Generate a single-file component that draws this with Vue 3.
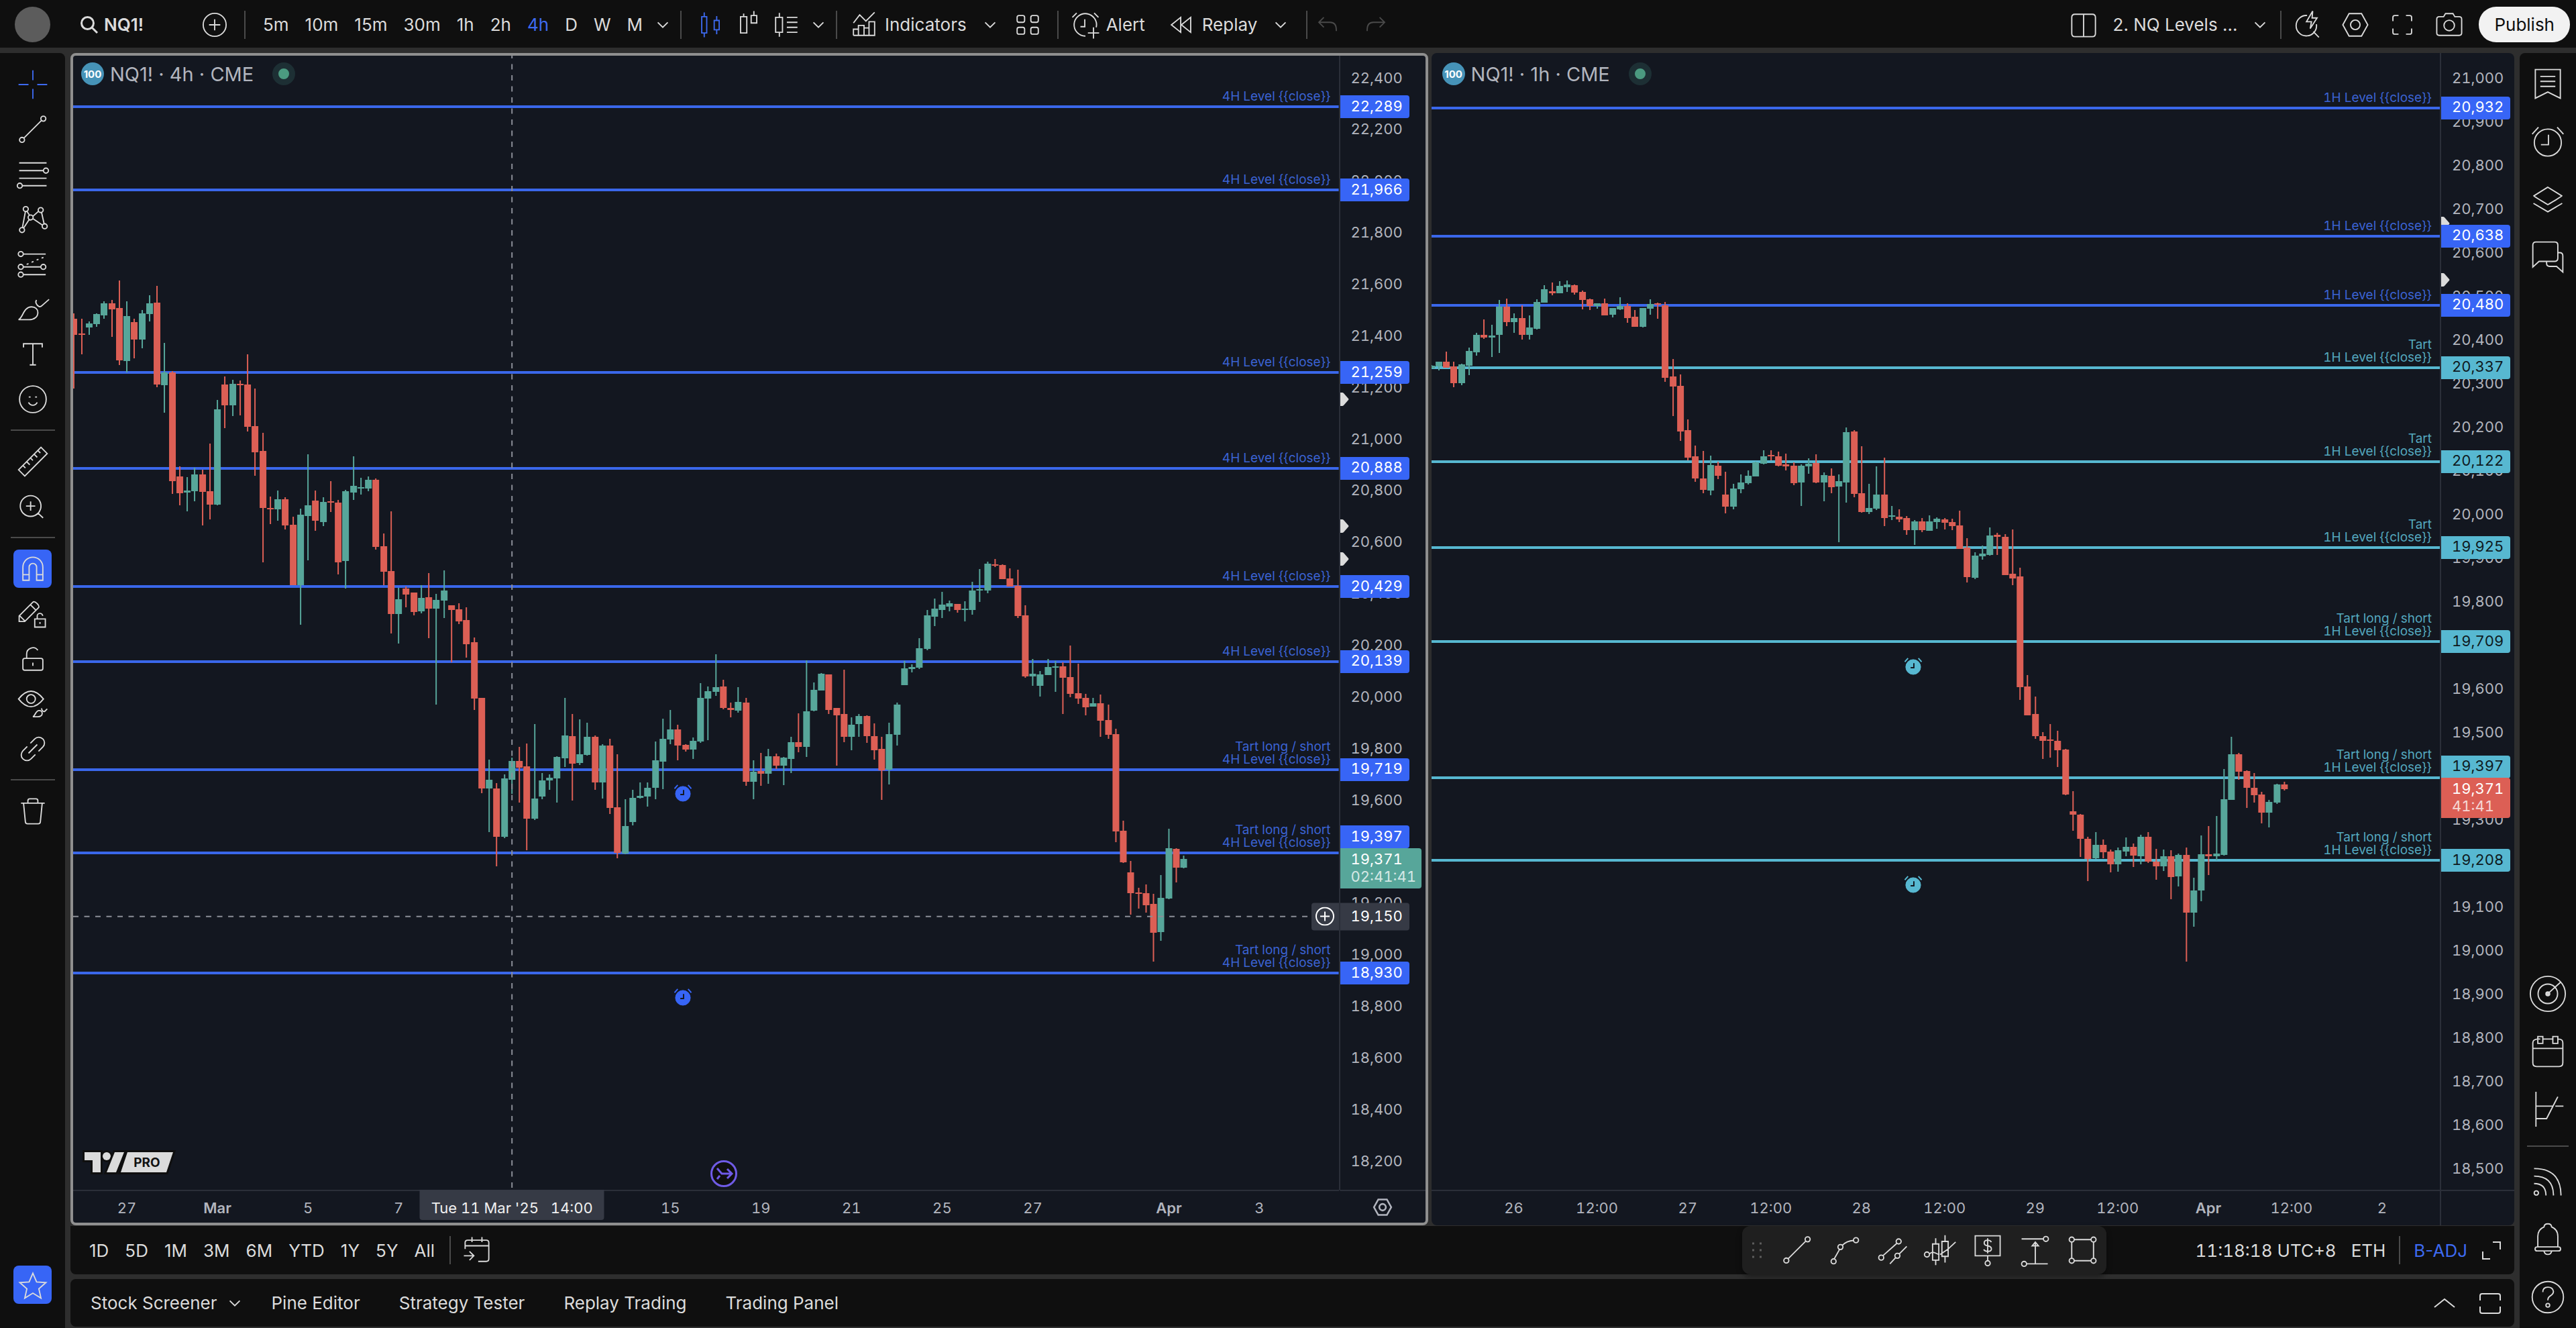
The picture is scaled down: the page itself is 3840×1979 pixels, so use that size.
<template>
  <div class="app">
    <!-- Top bar -->
    <header class="topbar">
      <button class="avatar" aria-label="Account"></button>
      <button class="symbol">
        <svg class="icon-search" viewBox="0 0 28 28"><path :d="icons.search" /></svg>
        NQ1!
      </button>
      <button class="icon-btn" aria-label="Compare"><svg class="icon" viewBox="0 0 28 28"><path :d="icons.plus" /></svg></button>
      <span class="sep"></span>
      <div class="intervals">
        <button v-for="item in intervals" :key="item" class="text-btn" :class="{ active: item === '4h' }">{{ item }}</button>
      </div>
      <button class="chevron-btn" aria-label="Intervals"><svg class="icon" viewBox="0 0 28 28"><path :d="icons.chevron" /></svg></button>
      <span class="sep"></span>
      <div class="styles">
        <button v-for="name in ['candles', 'hollow', 'renko']" :key="name" class="icon-btn" :class="{ active: name === 'candles' }" :aria-label="name">
          <svg class="icon" viewBox="0 0 28 28"><path :d="icons[name]" /></svg>
        </button>
      </div>
      <button class="chevron-btn" aria-label="Chart types"><svg class="icon" viewBox="0 0 28 28"><path :d="icons.chevron" /></svg></button>
      <span class="sep"></span>
      <button class="label-btn"><svg class="icon" viewBox="0 0 28 28"><path :d="icons.indicators" /></svg>Indicators</button>
      <button class="chevron-btn wide" aria-label="Favorite indicators"><svg class="icon" viewBox="0 0 28 28"><path :d="icons.chevron" /></svg></button>
      <button class="icon-btn" aria-label="Templates"><svg class="icon" viewBox="0 0 28 28"><path :d="icons.grid" /></svg></button>
      <span class="sep"></span>
      <button class="label-btn"><svg class="icon" viewBox="0 0 28 28"><path :d="icons.alertAdd" /></svg>Alert</button>
      <button class="label-btn replay"><svg class="icon" viewBox="0 0 28 28"><path :d="icons.replay" /></svg>Replay</button>
      <button class="chevron-btn wide" aria-label="Replay options"><svg class="icon" viewBox="0 0 28 28"><path :d="icons.chevron" /></svg></button>
      <span class="sep"></span>
      <div class="history">
        <button class="icon-btn" disabled aria-label="Undo"><svg class="icon" viewBox="0 0 28 28"><path :d="icons.undo" /></svg></button>
        <button class="icon-btn" disabled aria-label="Redo"><svg class="icon" viewBox="0 0 28 28"><path :d="icons.redo" /></svg></button>
      </div>

      <div class="topbar-right">
        <button class="icon-btn" aria-label="Layout setup"><svg class="icon" viewBox="0 0 28 28"><path :d="icons.layout" /></svg></button>
        <button class="layout-name">2. NQ Levels ...</button>
        <button class="chevron-btn" aria-label="Manage layouts"><svg class="icon" viewBox="0 0 28 28"><path :d="icons.chevron" /></svg></button>
        <span class="sep"></span>
        <div class="tools">
          <button v-for="name in ['quick', 'settings', 'fullscreen', 'camera']" :key="name" class="icon-btn" :aria-label="name">
            <svg class="icon" viewBox="0 0 28 28"><path :d="icons[name]" /></svg>
          </button>
        </div>
        <button class="publish">Publish</button>
      </div>
    </header>

    <div class="body">
      <!-- Drawing tools -->
      <nav class="left-bar">
        <template v-for="(group, g) in drawingTools" :key="g">
          <hr v-if="g > 0" />
          <button v-for="name in group" :key="name" class="draw-btn" :class="{ on: name === 'magnet', active: name === 'cross' }" :aria-label="name">
            <svg class="icon" viewBox="0 0 28 28"><path :d="icons[name]" /></svg>
          </button>
        </template>
        <button class="draw-btn on star" aria-label="Favorites"><svg class="icon" viewBox="0 0 28 28"><path :d="icons.star" /></svg></button>
      </nav>

      <main class="center">
        <div class="charts">
          <section v-for="chart in charts" :key="chart.interval" class="chart" :class="{ selected: chart.selected }">
            <div class="plot">
              <svg class="canvas" :viewBox="`0 0 ${chart.width} ${chart.height}`" preserveAspectRatio="none">
                <rect
                  v-for="level in chart.levels"
                  :key="level.price"
                  x="0"
                  :y="Math.round(toY(chart, level.price)) - 2"
                  :width="chart.width"
                  height="4"
                  :class="level.tone"
                />
                <g v-for="(bar, i) in chart.bars" :key="i" :class="bar.dir">
                  <rect :x="bar.x - 1" :y="bar.high" width="2" :height="bar.low - bar.high" />
                  <rect :x="bar.x - 5" :y="bar.top" width="10" :height="Math.max(bar.bottom - bar.top, 2)" />
                </g>
                <template v-if="chart.cross">
                  <line class="cross" :x1="barX(chart, chart.cross.bar)" y1="0" :x2="barX(chart, chart.cross.bar)" :y2="chart.height" stroke-dashoffset="4" />
                  <line class="cross" x1="0" :y1="toY(chart, chart.cross.price)" :x2="chart.width - 42" :y2="toY(chart, chart.cross.price)" />
                </template>
              </svg>

              <div class="legend">
                <span class="legend-badge">100</span>
                <span class="legend-title">NQ1! · {{ chart.interval }} · CME</span>
                <span class="legend-status"></span>
              </div>

              <div
                v-for="level in chart.levels"
                :key="level.price"
                class="level-note"
                :class="level.tone"
                :style="{ top: pct(chart, level.price) }"
              >
                <span v-if="level.note">{{ level.note }}</span>
                <span>{{ chart.levelName }}</span>
              </div>

              <svg
                v-for="(mark, i) in chart.alarms"
                :key="i"
                class="alarm"
                :class="chart.alarmTone"
                viewBox="0 0 28 28"
                :style="{ left: mark.x + '%', top: pct(chart, mark.price) }"
              >
                <circle cx="14" cy="15" r="11.5" />
                <path d="M1 7l5-5.5M27 7l-5-5.5" />
                <path class="hands" d="M15 9v7h-5" />
              </svg>

              <template v-if="chart.selected">
                <svg class="brand" viewBox="0 0 132 30">
                  <path d="M0 0h24v30H12V12H0z" />
                  <circle cx="33" cy="6" r="6" />
                  <path d="M45 0h14L47 30H33z" />
                  <path d="M64 0h68l-10 30H54z" />
                  <text x="93" y="22">PRO</text>
                </svg>
                <svg class="roll" viewBox="0 0 40 40">
                  <circle cx="20" cy="20" r="18.5" />
                  <path d="M10 12l7 8h15M10 28l4-5M25 13l7 7-7 7" />
                </svg>
                <button class="cross-add" aria-label="Add at price" :style="{ top: pct(chart, chart.cross.price) }">
                  <svg viewBox="0 0 28 28"><circle cx="14" cy="14" r="13" /><path d="M14 7v14M7 14h14" /></svg>
                </button>
              </template>
            </div>

            <div class="price-axis">
              <span v-for="price in chart.ticks" :key="price" class="tick" :style="{ top: pct(chart, price) }">{{ money(price) }}</span>
              <svg v-for="price in chart.pointers" :key="price" class="pointer" viewBox="0 0 13 20" :style="{ top: pct(chart, price) }">
                <path d="M0 0h3q1 0 2 1l7 8q1 1 0 2l-7 8q-1 1-2 1H0z" />
              </svg>
              <span
                v-for="level in chart.levels"
                :key="level.price"
                class="price-badge"
                :class="level.tone"
                :style="{ top: pct(chart, level.badgeAt || level.price) }"
              >{{ money(level.price) }}</span>
              <span class="price-badge last" :class="chart.last.dir" :style="{ top: pct(chart, chart.last.at) }">
                {{ money(19371) }}<small>{{ chart.last.timer }}</small>
              </span>
              <span v-if="chart.cross" class="price-badge hover" :style="{ top: pct(chart, chart.cross.price) }">{{ money(chart.cross.price) }}</span>
            </div>

            <div class="time-axis">
              <span
                v-for="[bar, text] in chart.times"
                :key="bar"
                class="time"
                :class="{ month: /[A-Z]/.test(text) }"
                :style="{ left: (barX(chart, bar) / chart.width) * 100 + '%' }"
              >{{ text }}</span>
              <span v-if="chart.cross" class="time-badge" :style="{ left: (barX(chart, chart.cross.bar) / chart.width) * 100 + '%' }">{{ chart.cross.time }}</span>
            </div>
            <div class="corner">
              <button v-if="chart.selected" aria-label="Axis settings"><svg class="icon small" viewBox="0 0 28 28"><path :d="icons.settings" /></svg></button>
            </div>
          </section>
        </div>

        <!-- Date ranges and clock -->
        <div class="ranges">
          <button v-for="range in ranges" :key="range" class="range">{{ range }}</button>
          <span class="sep"></span>
          <button class="icon-btn goto" aria-label="Go to date"><svg class="icon" viewBox="0 0 28 28"><path :d="icons.goto" /></svg></button>

          <div class="favorites">
            <svg class="grip" viewBox="0 0 16 24"><path d="M1 2h3M12 2h3M1 12h3M12 12h3M1 22h3M12 22h3" /></svg>
            <button v-for="name in favorites" :key="name" :aria-label="name">
              <svg class="icon" viewBox="0 0 28 28"><path :d="icons[name]" /></svg>
            </button>
          </div>

          <div class="session">
            <button class="clock">11:18:18 UTC+8</button>
            <button>ETH</button>
            <span class="sep"></span>
            <button class="active">B-ADJ</button>
            <button class="expand" aria-label="Expand"><svg viewBox="0 0 28 28"><path d="M16 2h11v11M1 16v11h11" /></svg></button>
          </div>
        </div>

        <footer class="panels">
          <button>Stock Screener</button>
          <button class="chevron-btn" aria-label="Screeners"><svg class="icon" viewBox="0 0 28 28"><path :d="icons.chevron" /></svg></button>
          <button>Pine Editor</button>
          <button>Strategy Tester</button>
          <button>Replay Trading</button>
          <button>Trading Panel</button>
          <div class="panel-controls">
            <button aria-label="Open panel"><svg viewBox="0 0 32 32"><path d="M1 22l15-12 15 12" /></svg></button>
            <button aria-label="Maximize panel"><svg viewBox="0 0 32 32"><path d="M1 12V5q0-3 3-3h24q3 0 3 3v7M1 21v7q0 3 3 3h24q3 0 3-3v-7" /></svg></button>
          </div>
        </footer>
      </main>

      <!-- Widgets -->
      <aside class="right-bar">
        <button v-for="name in widgetsTop" :key="name" :aria-label="name">
          <svg viewBox="0 0 44 44"><path :d="icons[name]" /></svg>
        </button>
        <span class="spacer"></span>
        <template v-for="name in widgetsBottom" :key="name">
          <hr v-if="name === 'streams'" />
          <button :aria-label="name">
            <svg viewBox="0 0 44 44"><path :d="icons[name]" /></svg>
          </button>
        </template>
      </aside>
    </div>
  </div>
</template>

<script setup>
// circle as a path segment
const ring = (x, y, r) => `M${x - r} ${y}a${r} ${r} 0 1 0 ${2 * r} 0a${r} ${r} 0 1 0 ${-2 * r} 0z`

// rounded 6x5.5 tile
const tile = (x, y) => `M${x + 1.5} ${y}h3q1.5 0 1.5 1.5v2.5q0 1.5-1.5 1.5h-3q-1.5 0-1.5-1.5v-2.5q0-1.5 1.5-1.5z`

const icons = {
  search: ring(11.5, 11.5, 9) + 'M18 18l8 8',
  plus: ring(14, 14, 9.2) + 'M14 9.5v9M9.5 14h9',
  chevron: 'M10 12l4 4 4-4',
  candles: 'M8.5 4v3.5M8.5 20.5V24M6.5 7.5h4v13h-4zM18.5 7v3.5M18.5 18v3.5M16.5 10.5h4V18h-4z',
  hollow: 'M7.5 7.5h5v13h-5zM10 5v2.5M16 6.5h4.5v6H16zM18.2 3v3.5',
  renko: 'M8.5 4.5V8M8.5 20v3.5M5.5 8H11v12H5.5zM14.5 8H23M14.5 12H23M14.5 16H23M14.5 20H23',
  indicators: 'M5.5 12.5l5-6.5 5 5L22.5 4M5.5 22.5v-5h4v5M9.5 22.5v-8h4.5v8M14 22.5v-6h4v6M18 22.5v-11h4.5v11zM5.5 22.5h17',
  grid: tile(5.5, 6.5) + tile(16.5, 6.5) + tile(5.5, 16) + tile(16.5, 16),
  alertAdd: 'M22.7 16a9 9 0 1 0-8.7 7M3.5 8L7 4.5M24.5 8L21 4.5M13.5 9.5v6H10M20.5 16v9M16 20.5h9',
  replay: 'M13.5 8v12L6 14zM21.5 8v12L14 14z',
  undo: 'M11 8l-4 4 4 4M7 12h9q5 0 5 6v1',
  redo: 'M17 8l4 4-4 4M21 12h-9q-5 0-5 6v1',
  layout: 'M7 5.5h14q2.5 0 2.5 2.5v13q0 2.5-2.5 2.5H7q-2.5 0-2.5-2.5V8Q4.5 5.5 7 5.5zM14 5.5v18',
  quick: 'M13 6.5a8.2 8.2 0 1 0 7.5 7M18 19.5l4.5 4.5M17.5 3l-5 8.5h4l-1 5.5 5.5-8.5h-4z',
  settings: 'M9 5h10l5 9-5 9H9l-5-9z' + ring(14, 14, 3.8),
  fullscreen: 'M6.5 11V8q0-1.5 1.5-1.5h3M17 6.5h3q1.5 0 1.5 1.5v3M21.5 17v3q0 1.5-1.5 1.5h-3M11 21.5H8q-1.5 0-1.5-1.5v-3',
  camera: 'M6 7.5h3.5l1.5-2.5h6l1.5 2.5H22q2 0 2 2v11q0 2-2 2H6q-2 0-2-2v-11q0-2 2-2z' + ring(14, 14.5, 4.2),

  cross: 'M2.5 14h8M17.5 14h8M14 2.5v8M14 17.5v8',
  trend: ring(5.3, 22.3, 2) + ring(22.4, 5.3, 2) + 'M6.7 20.9L21 6.7',
  fib: ring(24.5, 10.9, 2) + ring(3.5, 23, 2) + 'M3 4.7h22M3 10.9h19.5M3 17h22M5.5 23H25',
  pattern: ring(5.3, 22.5, 2) + ring(8.3, 5.7, 2) + ring(12.2, 12.4, 2) + ring(20.3, 6.5, 2) + ring(23.5, 19.5, 2) + 'M5.6 20.5L8 7.7M6.5 21l4.6-7M9.3 7.5l2 3.2M14 11.5l4.5-4M21 8.5l2 9M14 13.3l7.7 5.3',
  projection: ring(4.3, 5.7, 2) + ring(4.3, 16, 2) + ring(4.3, 22.2, 2) + ring(22.4, 16, 2) + 'M6.3 5.7h18M6.3 16h14M6.3 22.2h18M9 14l1.5-.6M13 12.3l1.5-.6M17 10.5l1.5-.6M21 9l1.5-.6',
  brush: 'M2.5 22.3c3.5-1.5 4-10.3 10.5-10.3 3 0 5 1.8 5 4.5 0 3.5-3 5.8-7 5.8zM17 6.5c-1.5 1.5 0 4.5 2 5.3 1 .3 1.5 0 2.5-1L27 6',
  text: 'M6.5 8.5v-3h15v3M14 5.5v17M11.5 22.5h5',
  smile: ring(14, 14, 10.7) + 'M10.5 16.5c1.5 3 5.5 3 7 0M10.7 12.2h1.5M15.8 12.2h1.5',
  ruler: 'M2.5 20.5l18-18 5 5-18 18zM6 17l2 2M9 14l2.5 2.5M12 11l2 2M15 8l2.5 2.5M18 5l2 2',
  zoom: ring(12.2, 13.5, 8.3) + 'M12.2 9.8v7.4M8.5 13.5h7.4M18.2 19.3l4 3.7',
  magnet: 'M6 23V12.5a8 8 0 0 1 16 0V23h-5V12.5a3 3 0 0 0-6 0V23zM6 18.5h5M17 18.5h5',
  pencilLock: 'M3 15.5V20h4.5L18.5 9c1.5-1.5-3-6-4.5-4.5zM12 6.5l4.5 4.5M3.5 15.5l4 4M15.5 18h8.5v6.5h-8.5zM17.5 18v-2a2.2 2.2 0 0 1 4.4-.5M19.7 20.5v1.5',
  lock: 'M7.5 13.5h13q1.5 0 1.5 1.5v6.5q0 1.5-1.5 1.5h-13Q6 23 6 21.5V15q0-1.5 1.5-1.5zM9 13.5V10a5 5 0 0 1 9-3M14 17v2.5',
  eye: 'M2.5 10Q12.5-2.5 22.5 10 12.5 22.5 2.5 10z' + ring(12.5, 10, 3.5) + 'M14 24.3c2-.5 2-5 5-5 1.5 0 2.5 1 2.5 2.3 0 1.7-1.5 2.7-3.5 2.7zM21 17.5c0 2 1.5 3 2.5 2.5l2-2',
  link: 'M12 9.5l3.5-3.5c2-2 4.7-1.7 6.5 0s1.8 4.5 0 6.5L18.5 16M16 18.5L12.5 22c-2 2-4.7 1.7-6.5 0s-1.8-4.5 0-6.5L9.5 12M10.5 17.5l7-7',
  trash: 'M4.5 7.5h19M10 7.5v-2Q10 4 11.5 4h5Q18 4 18 5.5v2M6.5 7.5l1.5 15q.2 1.5 1.7 1.5h8.6q1.5 0 1.7-1.5l1.5-15',
  star: 'M14 4.5l3 7 7.5.5-5.7 5 1.7 7.5L14 20.5 7.5 24.5 9.2 17 3.5 12l7.5-.5z',

  goto: 'M4.5 13V8q0-2 2-2h15q2 0 2 2v13q0 2-2 2H15M4.5 10.5h19M10 3.5v4M18 3.5v4M3.5 18.5H11M8 15l3.5 3.5L8 22',
  polyline: ring(5, 23, 2) + ring(10.5, 11.5, 2) + ring(23, 6, 2) + 'M5.5 21l4.3-7.6M12 10.2q3.5-3.7 9-4',
  channel: ring(5, 20, 2) + ring(19, 7, 2) + ring(18, 18.5, 2) + 'M6.3 18.5L17.6 8.5M12 25l4.6-5M19.5 17l6-6',
  candleTrend: ring(3.5, 17.5, 2) + 'M5.5 17c3-3 5 0 8 .5M20 13.5l6.5-6M14 17.5l6-4M10.5 4.5V9M10.5 22v4M8 9h5v13H8zM18 2v5M18 19v5M15.5 7h5v12h-5z',
  priceNote: 'M4 2.5h20v16H4zM14 18.5V22M17 7.5q-1-1.5-3-1.5-2.8 0-2.8 2.2 0 1.9 2.8 2.3 3 .5 3 2.5 0 2-3 2-2.2 0-3.2-1.5M14 4.5v12' + ring(14, 24.5, 2),
  priceRange: ring(22.5, 5, 2) + ring(5, 25, 2) + 'M3 5h17.5M7 25h17M14 25V8M11.5 10.5L14 7.5l2.5 3z',
  box: ring(5, 5.5, 2) + ring(22.5, 5.5, 2) + ring(5, 22.5, 2) + ring(22.5, 22.5, 2) + 'M7 5.5h13.5M7 22.5h13.5M5 7.5v13M22.5 7.5v13',

  watchlist: 'M12 10.5h20v23l-10-5-10 5zM16 16h12M16 20h12M16 24h12',
  alerts: ring(22, 22.8, 10.8) + 'M9.5 16l5-5.5M34.5 16l-5-5.5M22.5 16.5v8h-6',
  layers: 'M22 12.3l11.2 7q-.2.5-11.2 7-11-6.5-11.2-7zM10.5 25.2L22 32l11.5-6.8',
  chat: 'M12.5 10h15q2.5 0 2.5 2.5v10.5q0 2.5-2.5 2.5H15L10 30V12.5Q10 10 12.5 10zM30 18.5h1.5q2.5 0 2.5 2.5v13l-5-4.5h-5.5q-2.5 0-2.5-2.5v-1.5',
  radar: ring(22, 22, 14) + ring(22, 22, 7.8) + ring(22, 22, 1.5) + ring(22, 22, 0.7) + 'M23 21l9.5-8.5',
  calendar: 'M16 12h-1.5Q10 12 10 15v16q0 3 3 3h18q3 0 3-3V15q0-3-3.5-3H30M18 12h8M10 19.5h24M14 10h4v5.5h-4zM26 10h4v5.5h-4z',
  dom: 'M12.5 8v28M12.5 19.5H26M28 19.5h6.5M12.5 29.5h8.5l9-17.5',
  streams: ring(12.8, 31, 1.7) + 'M11 23.5q9.5 0 9.5 9.5M11 17.5q15.5 0 15.5 15.5M11 11.5q21.5 0 21.5 21.5',
  bell: 'M14 28v-8.5q0-5.5 5-7.5 0-2.5 3-2.5t3 2.5q5 2 5 7.5V28M13.5 28h17q1.7 0 1.7 1.6t-1.7 1.6h-17q-1.7 0-1.7-1.6T13.5 28zM19 31.5q.5 2.5 3 2.5t3-2.5',
  help: ring(22, 22, 12.5) + 'M18 18q0-4 4-4t4.5 3.5q0 2-2.5 3.5-2 1.2-2 3.5' + ring(22, 28.5, 1.5)
}

const intervals = ['5m', '10m', '15m', '30m', '1h', '2h', '4h', 'D', 'W', 'M']
const ranges = ['1D', '5D', '1M', '3M', '6M', 'YTD', '1Y', '5Y', 'All']
const drawingTools = [
  ['cross', 'trend', 'fib', 'pattern', 'projection', 'brush', 'text', 'smile'],
  ['ruler', 'zoom'],
  ['magnet', 'pencilLock', 'lock', 'eye', 'link'],
  ['trash']
]
const favorites = ['trend', 'polyline', 'channel', 'candleTrend', 'priceNote', 'priceRange', 'box']
const widgetsTop = ['watchlist', 'alerts', 'layers', 'chat']
const widgetsBottom = ['radar', 'calendar', 'dom', 'streams', 'bell', 'help']

// Each block: a base price, points per unit, then "dir high top bottom low" in units below the base
const blocks4h = [
  {
    base: 21714.4,
    unit: 0.9956,
    rows: `r 227 248 312 520,r 247 307 311 388,g 259 266 281 311,g 227 230 269 279,g 180 188 234 247,r 175 188 211 320,
      r 99 207 410 429,g 181 237 412 456,r 247 260 328 402,g 213 227 328 362,g 158 188 230 259,r 120 186 504 515,
      g 342 458 507 614,r 453 458 881 929,r 823 862 928 975,g 865 917 925 997,g 828 855 920 959,r 836 855 922 1053,
      r 733 920 972 1029,g 565 601 972 975,r 474 505 585 673,g 487 502 585 627,r 489 502 508 625,r 388 505 669 687,
      r 520 666 767 859,r 692 764 985 1196,r 941 984 988 1048,g 918 951 990 1034,r 943 951 1053 1069,r 1019 1051 1285 1285,
      g 989 1011 1286 1440,g 777 976 1017 1190,r 917 956 1035 1073,g 944 962 1040 1056,r 881 960 964 1000,r 955 964 1198 1243,
      g 915 920 1192 1299,g 785 899 924 955,g 868 905 909 932,g 863 875 909 920,r 870 875 1136 1147,r 1084 1133 1233 1286,
      r 998 1231 1398 1474,g 1297 1341 1398 1512,r 1290 1300 1322 1372,r 1315 1315 1389 1403,g 1285 1336 1388 1395,
      r 1238 1334 1377 1492,g 1320 1343 1377 1750,g 1227 1307 1347 1415,r 1365 1365 1382 1586`
  },
  {
    base: 20569.6,
    unit: 0.86727,
    rows: `r 238 264 318 329,r 255 313 420 480,r 390 412 662 714,r 660 660 1065 1085,g 936 1026 1065 1260,r 1040 1065 1281 1413,
      g 1002 1020 1280 1286,g 926 942 1025 1090,r 880 942 972 1127,r 865 967 1200 1341,g 778 1109 1199 1205,g 995 1029 1100 1112,
      g 1003 1018 1028 1070,g 922 925 1020 1127,g 661 828 929 968,r 732 830 954 1118,g 756 911 951 960,g 772 835 915 918,
      r 828 835 1038 1070,g 868 874 1038 1110,r 843 873 1151 1180,r 912 1148 1353 1377,g 1113 1233 1356 1360,g 1071 1108 1214 1229,
      g 1039 1098 1108 1110,g 1038 1062 1102 1146,g 855 939 1063 1113,g 753 844 946 1068,g 715 801 847 866,r 781 801 872 938,
      r 866 869 891 899,g 838 851 890 933,g 594 661 854 861,g 609 630 662 848,g 465 612 633 650,r 579 610 706 712,
      r 682 706 714 748,g 612 678 717 726,r 660 680 1036 1053,g 940 990 1036 1113,r 905 988 1000 1053,g 888 920 1000 1044,
      r 909 920 963 978,g 925 927 962 1050,g 835 859 933 996,r 730 858 879 904,g 491 720 879 924,g 590 624 717 721,
      g 549 552 627 627,r 554 556 713 732,r 706 706 738 963,r 535 732 834 858,g 747 779 834 894,g 733 741 777 834,
      r 738 742 831 861,r 774 831 894 936,r 835 889 984 1116,g 771 822 981 1047,g 682 690 825 874,g 496 528 603 603,
      g 510 522 531 546,g 393 438 525 530`
  },
  {
    base: 20621.7,
    unit: 1.07856,
    rows: `g 262 283 404 407,g 223 258 287 322,g 197 244 262 292,g 230 240 252 267,r 242 242 263 272,g 232 257 261 304,
      g 161 194 262 280,g 117 189 194 235,g 90 96 194 203,r 79 98 102 109,r 100 102 153 153,r 113 150 179 179,
      r 119 175 285 293,r 246 282 502 506,g 439 491 502 536,g 483 494 536 574,g 439 469 496 497,g 447 465 469 558,
      r 450 466 507 636,r 391 504 564 577,r 456 562 581 600,r 565 579 612 641,g 579 598 610 610,r 568 598 662 720,
      r 603 659 712 726,r 689 709 1059 1098,r 1021 1057 1171 1172,r 1164 1206 1281 1357,r 1262 1278 1283 1337,
      r 1250 1282 1324 1352,r 1284 1320 1423 1526,g 1217 1297 1422 1452,g 1049 1119 1300 1302,r 1119 1121 1189 1242,
      g 1145 1159 1189 1192`
  }
]

const blocks1h = [
  {
    base: 20564.1,
    unit: 0.51251,
    rows: `g 432 434 447 447,g 416 416 438 455,r 373 416 443 443,r 416 438 513 530,g 426 430 513 523,g 353 369 435 477,
      g 288 297 375 390,r 227 297 309 315,g 252 300 309 396,g 141 172 297 378,r 135 172 240 258,g 200 222 240 288,
      r 164 222 297 318,g 210 265 297 317,g 139 149 270 273,g 75 93 153 153,r 63 101 111 120,g 57 79 111 111,
      g 54 72 83 105,r 72 75 108 117,r 99 104 141 183,r 135 138 168 186,g 155 157 168 180,r 135 157 209 209,
      g 176 176 207 218,g 128 167 182 186,r 155 167 222 243,r 186 216 261 261,g 176 176 261 265,g 139 159 180 207,
      r 153 157 163 225,r 150 165 488 506,r 404 484 528 660,r 474 525 729 771,r 675 724 845 857,r 792 841 939 953,
      r 815 938 991 1006,g 837 880 993 1014,r 865 882 927 942,r 908 1011 1065 1095,g 963 984 1065 1078,g 920 958 987 1005,
      g 903 927 960 965,g 864 866 930 930,g 812 839 873 876,r 812 834 839 858,r 820 839 881 884,r 828 877 885 902,
      r 867 882 960 969,g 876 882 957 1063,g 849 873 885 918,r 831 870 957 960,g 912 924 957 1041,r 895 927 978 1006,
      g 921 951 975 1224,g 711 732 957 1047,r 723 729 1009 1023,r 796 1005 1089 1091,g 963 1071 1089 1099,g 886 1012 1075 1079,
      r 846 1012 1116 1151,g 1062 1103 1107 1125,r 1077 1109 1122 1134,r 1107 1116 1171 1191,g 1126 1131 1171 1235,
      r 1116 1131 1171 1179,g 1104 1131 1172 1174,g 1113 1119 1135 1163,r 1117 1122 1137 1167,r 1120 1134 1152 1170`
  },
  {
    base: 20256.6,
    unit: 0.84327,
    rows: `r 293 334 397 397,r 368 394 474 489,g 407 416 476 480,g 388 410 418 427,g 340 361 413 415,r 353 360 364 413,
      r 357 364 468 468,r 344 464 478 495,r 448 473 773 808,r 740 771 850 850,r 799 846 906 914,r 896 906 918 969,
      r 874 915 919 965,r 892 918 944 990,r 940 943 1064 1067,r 1056 1110 1120 1163,r 1118 1119 1185 1234,r 1180 1185 1240 1300,
      g 1167 1202 1238 1240,r 1187 1202 1222 1238,r 1214 1220 1254 1276,g 1209 1217 1255 1274,g 1182 1207 1219 1232,
      r 1198 1207 1231 1261,g 1175 1180 1232 1254,r 1167 1180 1248 1250,r 1213 1248 1259 1296,g 1215 1233 1259 1273,
      r 1217 1233 1289 1349,g 1225 1229 1288 1315,r 1209 1229 1385 1518,g 1290 1325 1385 1424,g 1176 1227 1326 1355,
      r 1150 1227 1233 1284,g 1124 1225 1233 1243,g 995 1077 1228 1231,g 908 956 1079 1080,r 951 956 1003 1024,
      r 999 1001 1047 1102,r 1006 1046 1066 1087,r 1057 1065 1114 1143,g 1079 1085 1114 1154,g 1036 1038 1087 1091,
      r 1030 1038 1051 1054`
  }
]

const STEP = 11.25
const barX = (chart, index) => Math.round(chart.firstBar + index * STEP)
const ratio = (chart, price) => (chart.max - price) / (chart.max - chart.min)
const toY = (chart, price) => ratio(chart, price) * chart.height
const pct = (chart, price) => ratio(chart, price) * 100 + '%'
const money = (price) => price.toLocaleString('en-US')

const buildBars = (chart, blocks) => {
  const bars = []
  for (const { base, unit, rows } of blocks) {
    for (const row of rows.split(',')) {
      const [dir, ...values] = row.trim().split(' ')
      const [high, top, bottom, low] = values.map((v) => Math.round(toY(chart, base - v * unit)))
      bars.push({ dir, high, top, bottom, low, x: barX(chart, bars.length) })
    }
  }
  return bars
}

const range = (from, to, step) => {
  const list = []
  for (let value = from; value >= to; value -= step) list.push(value)
  return list
}

const LONG_SHORT = 'Tart long / short'

const charts = [
  {
    interval: '4h',
    selected: true,
    width: 1886,
    height: 1690,
    firstBar: 1.4,
    max: 22487.2,
    min: 18090.1,
    ticks: range(22400, 18200, 200),
    pointers: [21155, 20663, 20536],
    levelName: '4H Level {{close}}',
    levels: [
      { price: 22289, tone: 'blue' },
      { price: 21966, tone: 'blue' },
      { price: 21259, tone: 'blue' },
      { price: 20888, tone: 'blue' },
      { price: 20429, tone: 'blue' },
      { price: 20139, tone: 'blue' },
      { price: 19719, tone: 'blue', note: LONG_SHORT },
      { price: 19397, tone: 'blue', note: LONG_SHORT, badgeAt: 19458 },
      { price: 18930, tone: 'blue', note: LONG_SHORT }
    ],
    alarmTone: 'blue',
    alarms: [{ x: 48.2, price: 19627 }, { x: 48.2, price: 18837 }],
    last: { dir: 'g', at: 19336, timer: '02:41:41' },
    cross: { bar: 58, price: 19150, time: "Tue 11 Mar '25   14:00" },
    times: [[7, '27'], [19, 'Mar'], [31, '5'], [43, '7'], [79, '15'], [91, '19'], [103, '21'], [115, '25'], [127, '27'], [145, 'Apr'], [157, '3']]
  },
  {
    interval: '1h',
    width: 1503,
    height: 1694,
    firstBar: -0.5,
    max: 21057.7,
    min: 18453.1,
    ticks: range(21000, 18500, 100),
    pointers: [20667, 20538],
    levelName: '1H Level {{close}}',
    levels: [
      { price: 20932, tone: 'blue' },
      { price: 20638, tone: 'blue' },
      { price: 20480, tone: 'blue' },
      { price: 20337, tone: 'teal', note: 'Tart' },
      { price: 20122, tone: 'teal', note: 'Tart' },
      { price: 19925, tone: 'teal', note: 'Tart' },
      { price: 19709, tone: 'teal', note: LONG_SHORT },
      { price: 19397, tone: 'teal', note: LONG_SHORT, badgeAt: 19422 },
      { price: 19208, tone: 'teal', note: LONG_SHORT }
    ],
    alarmTone: 'teal',
    alarms: [{ x: 47.8, price: 19653 }, { x: 47.8, price: 19153 }],
    last: { dir: 'r', at: 19351, timer: '41:41' },
    times: [[11, '26'], [22, '12:00'], [34, '27'], [45, '12:00'], [57, '28'], [68, '12:00'], [80, '29'], [91, '12:00'], [103, 'Apr'], [114, '12:00'], [126, '2']]
  }
]
charts[0].bars = buildBars(charts[0], blocks4h)
charts[1].bars = buildBars(charts[1], blocks1h)
</script>

<style>
body {
  margin: 0;
  background: #2e2e2e;
}
</style>

<style scoped>
.app {
  display: flex;
  flex-direction: column;
  gap: 8px;
  height: 100vh;
  color: #dbdbdb;
  font-family: Inter, 'Liberation Sans', sans-serif;
  font-size: 26px;
}

button {
  display: flex;
  align-items: center;
  justify-content: center;
  margin: 0;
  padding: 0;
  border: none;
  background: none;
  color: inherit;
  font: inherit;
  white-space: nowrap;
  cursor: pointer;
}

svg path,
svg circle {
  fill: none;
  stroke: currentColor;
}

.icon {
  display: block;
  flex: none;
  width: 52px;
  height: 52px;
}

.icon.small {
  width: 36px;
  height: 36px;
}

.icon.small path {
  stroke-width: 2;
}

.active {
  color: #3d6af0;
}

.sep {
  flex: none;
  width: 2px;
  height: 42px;
  background: #4a4a4a;
}

/* Top bar */
.topbar {
  display: flex;
  align-items: center;
  flex: none;
  box-sizing: border-box;
  height: 71px;
  padding-top: 2px;
  background: #0f0f0f;
}

.avatar {
  flex: none;
  width: 53px;
  height: 53px;
  margin-left: 22px;
  border-radius: 50%;
  background: #5c5c5c;
}

.symbol {
  justify-content: flex-start;
  gap: 8px;
  width: 187px;
  margin-left: 32px;
  padding: 0 12px;
  font-weight: 600;
}

.icon-search {
  width: 28px;
  height: 28px;
}

.icon-search path {
  stroke-width: 3;
}

.topbar .sep {
  margin: 0 14px 0 18px;
}

.topbar .chevron-btn + .sep {
  margin-left: 8px;
}

.intervals,
.styles {
  display: flex;
}

.text-btn {
  padding: 0 12px;
}

.styles {
  gap: 4px;
  margin: 0 4px;
}

.chevron-btn {
  width: 36px;
}

.chevron-btn.wide {
  width: 60px;
  margin-left: 5px;
}

.label-btn {
  gap: 5px;
}

.label-btn.replay {
  margin-left: 28px;
}

.history {
  display: flex;
  gap: 20px;
  margin-left: -10px;
  color: #4a4a4a;
}

.history button {
  color: inherit;
}

.topbar-right {
  display: flex;
  align-items: center;
  margin-left: auto;
  padding-right: 9px;
}

.topbar-right .chevron-btn + .sep {
  margin-left: 12px;
}

.layout-name {
  margin: 0 16px 0 18px;
}

.tools {
  display: flex;
  gap: 18px;
  margin-right: 18px;
}

.publish {
  height: 53px;
  padding: 0 23px;
  border-radius: 26px;
  background: #f2f2f2;
  color: #0f0f0f;
}

/* Body */
.body {
  display: flex;
  flex: 1;
  min-height: 0;
  gap: 8px;
}

.left-bar,
.right-bar {
  display: flex;
  flex-direction: column;
  align-items: center;
  flex: none;
  background: #0f0f0f;
}

.left-bar {
  width: 97px;
  padding-top: 13px;
  border-radius: 0 8px 0 0;
}

.left-bar hr,
.right-bar hr {
  flex: none;
  width: 66px;
  height: 2px;
  margin: 12px 0;
  border: none;
  background: #4a4a4a;
}

.draw-btn {
  flex: none;
  width: 57px;
  height: 67px;
}

.draw-btn.on {
  height: 57px;
  margin: 5px 0;
  border-radius: 8px;
  background: #3765f6;
}

.draw-btn.star {
  margin: auto 0 36px;
}

.right-bar {
  width: 84px;
  padding: 3px 0;
  border-radius: 8px 0 0 0;
}

.right-bar button {
  height: 86px;
}

.right-bar svg {
  width: 82px;
  height: 82px;
}

.right-bar hr {
  width: 62px;
  margin: 11px 0 9px;
}

.spacer {
  flex: 1;
}

.center {
  display: flex;
  flex-direction: column;
  flex: 1;
  min-width: 0;
}

/* Charts */
.charts {
  display: grid;
  grid-template-columns: 2023fr 1614fr;
  gap: 5px;
  flex: 1;
  min-height: 0;
}

.chart {
  display: grid;
  grid-template-columns: 1fr 111px;
  grid-template-rows: 1fr 53px;
  overflow: hidden;
  border-radius: 8px;
  background: #131720;
  color: #b2b5be;
  font-size: 22px;
  font-variant-numeric: tabular-nums;
}

.chart.selected {
  grid-template-columns: 1fr 129px;
  grid-template-rows: 1fr 49px;
  border: 4px solid #8f8f8f;
}

.plot {
  position: relative;
  overflow: hidden;
}

.canvas {
  position: absolute;
  width: 100%;
  height: 100%;
}

.canvas .g {
  fill: #57a69a;
}

.canvas .r {
  fill: #dc5f55;
}

.canvas .blue {
  fill: #3a67ea;
}

.canvas .teal {
  fill: #57b8d1;
}

.cross {
  stroke: #8b8e97;
  stroke-width: 2;
  stroke-dasharray: 8 8.5;
}

.legend {
  position: absolute;
  top: 13px;
  left: 16px;
  display: flex;
  align-items: center;
  height: 36px;
  font-size: 29px;
  font-variant-numeric: normal;
}

.selected .legend {
  top: 9px;
  left: 12px;
}

.legend-badge {
  display: flex;
  align-items: center;
  justify-content: center;
  width: 34px;
  height: 34px;
  margin-right: 9px;
  border-radius: 50%;
  background: #4693b8;
  color: #fff;
  font-size: 15px;
  font-weight: 700;
}

.legend-status {
  width: 16px;
  height: 16px;
  margin-left: 28px;
  border: 9px solid #1d2f34;
  border-radius: 50%;
  background: #4b9a80;
}

.level-note {
  position: absolute;
  right: 12px;
  display: flex;
  flex-direction: column;
  align-items: flex-end;
  transform: translateY(calc(-100% - 6px));
  font-size: 19px;
  line-height: 19px;
}

.level-note.blue {
  color: #3b63d4;
}

.level-note.teal {
  color: #54a8bf;
}

.alarm {
  position: absolute;
  width: 27px;
  height: 27px;
  transform: translate(-50%, -50%);
}

.alarm circle {
  fill: currentColor;
}

.alarm path {
  stroke-width: 2;
}

.alarm .hands {
  stroke: #131720;
}

.alarm.blue {
  color: #3765f6;
}

.alarm.teal {
  color: #57b8d1;
}

.brand {
  position: absolute;
  bottom: 26px;
  left: 17px;
  width: 132px;
  height: 30px;
  overflow: visible;
}

.brand path,
.brand circle {
  fill: #dbdbdb;
  stroke: #0f0f0f;
  stroke-width: 6;
  paint-order: stroke;
}

.brand text {
  fill: #131313;
  font-size: 19px;
  font-weight: 700;
  text-anchor: middle;
}

.roll {
  position: absolute;
  bottom: 4px;
  left: 51.4%;
  width: 40px;
  height: 40px;
  transform: translateX(-50%);
  color: #6f5be6;
}

.roll path,
.roll circle {
  stroke-width: 3;
}

.roll circle {
  fill: #0f0f0f;
}

.cross-add {
  position: absolute;
  right: 0;
  width: 41px;
  height: 41px;
  transform: translateY(-50%);
  border-radius: 4px 0 0 4px;
  background: #363a45;
  color: #fff;
}

.cross-add svg {
  width: 28px;
  height: 28px;
}

.cross-add path,
.cross-add circle {
  stroke-width: 2;
}

.price-axis {
  position: relative;
  overflow: hidden;
  border-left: 2px solid #2b2f39;
}

.tick {
  position: absolute;
  left: 16px;
  padding-bottom: 3px;
  transform: translateY(-50%);
  line-height: 28px;
}

.pointer {
  position: absolute;
  left: 0;
  width: 13px;
  height: 20px;
  transform: translateY(-50%);
}

.pointer path {
  fill: #dbdbdb;
  stroke: none;
}

.price-badge {
  position: absolute;
  left: 0;
  display: flex;
  flex-direction: column;
  justify-content: center;
  box-sizing: border-box;
  min-width: 103px;
  height: 34px;
  padding: 0 8px 3px 16px;
  transform: translateY(-50%);
  border-radius: 0 4px 4px 0;
  color: #fff;
  line-height: 28px;
}

.price-badge.blue {
  background: #3765f6;
}

.price-badge.teal {
  background: #57b8d1;
  color: #0f1a20;
}

.price-badge.last {
  height: 60px;
  line-height: 26px;
}

.price-badge.last small {
  font-size: 22px;
  opacity: 0.75;
}

.price-badge.g {
  background: #57a69a;
}

.price-badge.r {
  background: #dc5f55;
}

.price-badge.hover {
  height: 41px;
  background: #363a45;
}

.time-axis {
  position: relative;
  border-top: 2px solid #2b2f39;
}

.corner {
  display: flex;
  align-items: center;
  justify-content: center;
  border-top: 2px solid #2b2f39;
  border-left: 2px solid #2b2f39;
}

.selected .corner {
  border-left-color: transparent;
}

.time {
  position: absolute;
  top: 11px;
  transform: translateX(-50%);
  line-height: 28px;
}

.time.month {
  font-weight: 600;
}

.time-badge {
  position: absolute;
  top: -2px;
  padding: 9px 17px 0;
  transform: translateX(-50%);
  border-radius: 0 0 4px 4px;
  background: #363a45;
  color: #f0f0f0;
  line-height: 36px;
  white-space: pre;
}

/* Bottom bars */
.ranges,
.panels {
  display: flex;
  align-items: center;
  flex: none;
  height: 72px;
  background: #0f0f0f;
}

.ranges {
  margin-top: 1px;
  padding-left: 16px;
  border-radius: 0 0 8px 8px;
}

.range {
  padding: 0 12px;
}

.ranges .sep {
  margin: 0 10px;
}

.goto {
  margin-left: 3px;
}

.favorites {
  display: flex;
  align-items: center;
  height: 72px;
  margin-left: auto;
  margin-right: 132px;
  padding: 0 0 0 14px;
  border-radius: 12px;
  background: #1f1f1f;
  box-shadow: 0 4px 8px rgba(0, 0, 0, 0.4);
}

.favorites button {
  width: 71px;
}

.grip {
  width: 16px;
  height: 24px;
  margin-right: 16px;
  color: #5c5c5c;
}

.grip path {
  stroke-width: 3;
}

.session {
  display: flex;
  align-items: center;
  padding-right: 20px;
}

.clock {
  font-variant-numeric: tabular-nums;
}

.session button + button {
  margin-left: 22px;
}

.session .sep {
  margin: 0 20px;
}

.expand svg {
  display: block;
  width: 28px;
  height: 28px;
}

.expand path,
.panel-controls path {
  stroke-width: 2;
}

.panels {
  height: 71px;
  margin: 7px 0 2px;
  padding-left: 30px;
  border-radius: 8px;
}

.panels > button:not(:first-child, .chevron-btn) {
  margin-left: 58px;
}

.panels > .chevron-btn {
  margin-left: 9px;
}

.panels > .chevron-btn + button:not(:first-child, .chevron-btn) {
  margin-left: 36px;
}

.panel-controls {
  display: flex;
  gap: 36px;
  margin-left: auto;
  padding-right: 20px;
}

.panel-controls svg {
  display: block;
  width: 32px;
  height: 32px;
}
</style>
